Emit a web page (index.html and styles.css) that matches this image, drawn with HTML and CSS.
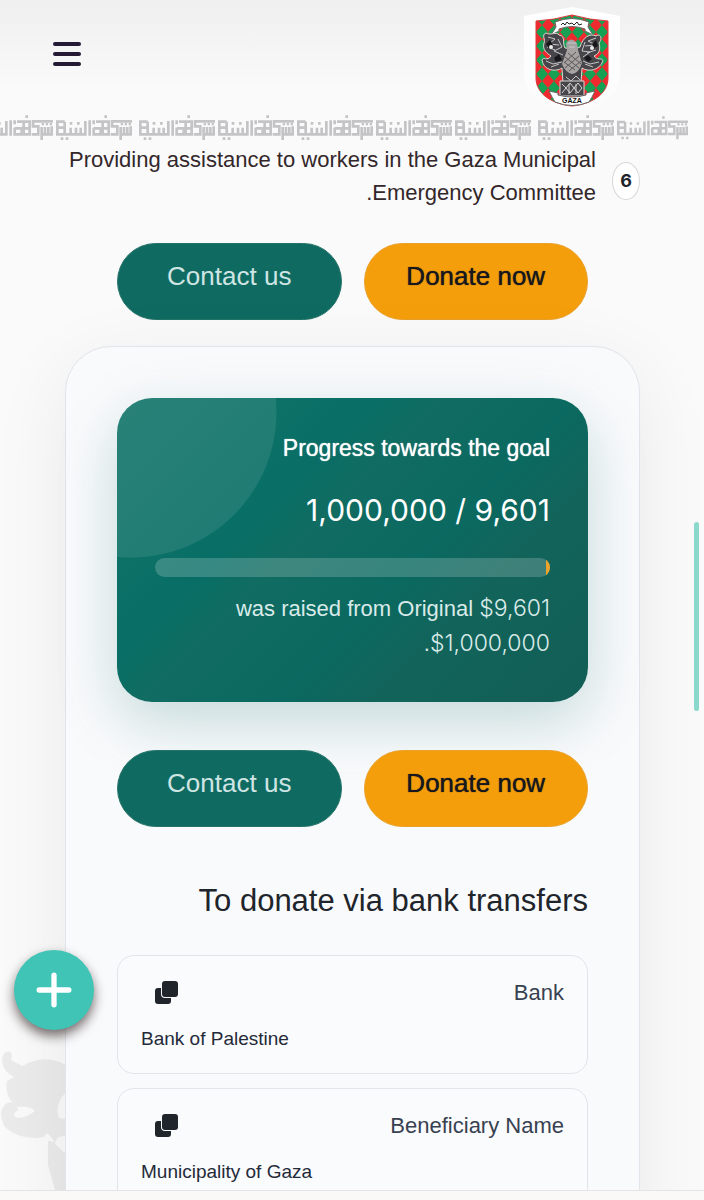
FILE: index.html
```html
<!DOCTYPE html>
<html lang="en">
<head>
<meta charset="utf-8">
<meta name="viewport" content="width=device-width, initial-scale=1">
<title>Gaza Municipality – Donate</title>
<link rel="stylesheet" href="styles.css">
</head>
<body>
<svg class="defs" aria-hidden="true">
  <symbol id="kufic" viewBox="0 0 228 75">
    <g fill="none" stroke="#c4c4c6" stroke-width="8">
      <path d="M26 20H4V58H88V18M4 38H26V20M26 36V58M44 38V58M60 38V58M74 38V58"/>
      <path d="M101 16V62M113 16V28M113 38V58H134V40H113M120 20H140V58H158V40H140M140 20H158V40"/>
      <path d="M164 19H228M168 19V34H184V58H164M194 36V75M194 58H224V34M204 36V58M214 36V58"/>
    </g>
    <path fill="#c4c4c6" d="M14 67h8v8h-8zM29 67h8v8h-8zM41 21h8v8h-8zM63 21h8v8h-8zM145 1h8v8h-8zM194 24h7v7h-7zM206 24h7v7h-7zM218 24h7v7h-7z"/>
  </symbol>
  <symbol id="copy" viewBox="0 0 24 24">
    <rect x="1" y="8" width="16" height="16" rx="3" fill="#20242b"/>
    <rect x="7" y="0" width="18" height="18" rx="4" fill="#fafbfd"/>
    <rect x="8" y="1" width="16" height="16" rx="3" fill="#20242b"/>
  </symbol>
</svg>
<div class="app">
  <header class="header">
    <div class="header-row">
      <button class="menu" aria-label="Menu"><span></span><span></span><span></span></button>
      <a class="logo" href="#" aria-label="Municipality of Gaza">
        <svg viewBox="0 0 96 110" width="96" height="110">
          <defs>
            <pattern id="check" width="12" height="14" patternUnits="userSpaceOnUse" patternTransform="translate(48 9)">
              <rect width="12" height="14" fill="#ee2a2e"/><path d="M6 0L12 7L6 14L0 7Z" fill="#16a053"/>
            </pattern>
            <linearGradient id="plate" x1="0" y1="0" x2="0" y2="1"><stop offset="0" stop-color="#fff"/><stop offset="1" stop-color="#fbfbfb"/></linearGradient>
          </defs>
          <path d="M0 14L48 5L96 14V76Q92 104 48 110Q4 104 0 76Z" fill="url(#plate)"/>
          <path d="M12 19Q30 18 48 13Q66 18 84 19V76C84 92 68 102 48 104C28 102 12 92 12 76Z" fill="url(#check)" stroke="#d9383a"/>
          <path d="M31 20Q48 13 65 20L64 25L69 33L61 29V27Q48 22 35 27V29L27 33L32 25Z" fill="#fff" stroke="#666"/>
          <path d="M37 23l2-2 2 2 2-3 2 2 3-1 2 2 3-3 2 3 3-1" fill="none" stroke="#222"/>
          <g fill="#45454a" stroke="#ded8d5">
            <path d="M41 46C38 41 42 34 35 33C32 29 27 34 22 31C17 33 22 38 20 41C18 48 23 51 27 54C23 60 20 54 18 58C20 69 32 70 38 66L39 81H57L58 66C64 70 75 69 79 59C78 55 73 59 70 54C77 51 76 45 75 41C79 36 76 31 72 34C66 31 59 35 56 45L51 47Z"/>
            <path d="M36 79H60V94H36Z"/>
          </g>
          <path d="M43 48L42 41Q47 34 53 41L54 48L58 61Q55 71 48 72Q41 70 38 62Z" fill="#a7a3a3"/>
          <path d="M41 55l14 11M40 60l11 8M44 51l13 11M55 54L41 66M57 59L45 69M52 50L40 61" stroke="#5c5859" fill="none"/>
          <path d="M44 41h8M45 45h6M24 35l7 2-6 5 10 1M34 37l4 8-8 4 9 4M23 45l8 3M22 59l7 3 9-2M27 65l8-3M72 36l-8 3 8 4-11 1M61 40l-3 9 8 1-7 5M72 48l-9 3M75 60l-9 2-7-3M69 65l-8-3M42 75l5 4 5-5 4 4" fill="none" stroke="#c8c5c6"/>
          <path d="M38 82l4 4 4-5 4 5 4-5 4 5M38 91l4-5 4 5 4-5 4 5 4-5M45 82v10M52 82v10" fill="none" stroke="#d9d5d4"/>
          <path d="M22 42l4-4 3 5-4 4zM68 42l4-4 2 6-4 2zM30 56l5-4 3 6-6 2zM60 56l4-3 4 4-4 3z" fill="#17171a"/>
          <circle cx="27" cy="45" r="2" fill="#eee"/><circle cx="68" cy="46" r="2" fill="#eee"/>
          <path d="M25 89L34 91V93Q48 97 62 93V91L71 89L68 95L65 100Q48 107 31 100L28 95Z" fill="#fff" stroke="#666"/>
          <text class="logo-word" x="48" y="101" text-anchor="middle">GAZA</text>
        </svg>
      </a>
    </div>
    <div class="band" aria-hidden="true">
      <svg><use href="#kufic"/></svg><svg><use href="#kufic"/></svg><svg><use href="#kufic"/></svg><svg><use href="#kufic"/></svg><svg><use href="#kufic"/></svg><svg><use href="#kufic"/></svg><svg><use href="#kufic"/></svg><svg><use href="#kufic"/></svg><svg><use href="#kufic"/></svg>
    </div>
  </header>
  <main class="content">
    <svg class="watermark" viewBox="0 0 66 140" aria-hidden="true"><path d="M2 12C2 4 5 1 10 2Q13 4 11 10L22 16Q45 3 66 15V42Q54 55 59 68L66 69V86Q56 85 55 94L66 104V140H55L48 115V91L54 92Q47 78 44 87Q20 91 5 77Q-4 61 7 53Q17 50 18 60Q10 65 18 68Q28 67 35 61Q30 56 19 57Q4 49 7 31L14 27Q4 22 2 12Z"/></svg>
    <div class="point">
      <p>Providing assistance to workers in the Gaza Municipal<br>.Emergency Committee</p>
      <span class="num">6</span>
    </div>
    <div class="actions outer"><a class="btn teal" href="#">Contact us</a><a class="btn gold" href="#">Donate now</a></div>
    <section class="card">
      <div class="progress">
        <h2>Progress towards the goal</h2>
        <div class="amount">1,000,000 / 9,601</div>
        <div class="track"><div class="fill"></div></div>
        <p>was raised from Original <span class="digits">$9,601</span><br>.<span class="digits">$1,000,000</span></p>
      </div>
      <div class="actions"><a class="btn teal" href="#">Contact us</a><a class="btn gold" href="#">Donate now</a></div>
      <h1>To donate via bank transfers</h1>
      <div class="field">
        <div class="field-top"><button class="copy" aria-label="Copy bank"><svg><use href="#copy"/></svg></button><span>Bank</span></div>
        <div class="value">Bank of Palestine</div>
      </div>
      <div class="field">
        <div class="field-top"><button class="copy" aria-label="Copy beneficiary name"><svg><use href="#copy"/></svg></button><span>Beneficiary Name</span></div>
        <div class="value">Municipality of Gaza</div>
      </div>
    </section>
  </main>
  <footer class="bottom"></footer>
  <div class="thumb"></div>
  <button class="fab" aria-label="Open quick actions"><svg viewBox="0 0 34 34"><path d="M17 3V31M3 17H31" stroke="#fff" stroke-width="5" stroke-linecap="round"/></svg></button>
</div>
</body>
</html>
```
FILE: styles.css
```css
* { box-sizing: border-box; }
body { margin: 0; font-family: "Liberation Sans", Arial, sans-serif; color: #33272a; background: #fafafa; }
h1, h2, p { margin: 0; font-weight: 400; }
a { text-decoration: none; color: inherit; }
button { border: 0; padding: 0; background: none; }
svg { display: block; }
.defs { position: absolute; width: 0; height: 0; }
.app { position: relative; height: 100vh; display: flex; flex-direction: column; overflow: hidden; }
.header { flex: none; background: linear-gradient(#efefef, #fafafa 90px); }
.header-row { display: flex; justify-content: space-between; align-items: flex-start; height: 115px; padding: 0 84px 0 53px; }
.menu { display: flex; flex-direction: column; gap: 6px; margin-top: 42px; }
.menu span { width: 28px; height: 4px; border-radius: 2px; background: #241a35; }
.logo { margin-top: 2px; }
.logo-word { font: bold 7px "Liberation Sans", sans-serif; fill: #111; }
.band { display: flex; gap: 3px; height: 28px; overflow: hidden; justify-content: flex-end; margin-right: 16px; }
.band svg { flex: none; width: 76px; height: 25px; }
.band svg:nth-child(3), .band svg:nth-child(8) { margin-left: 4px; }
.band svg:last-child { width: 71px; margin-right: 0; }
.band svg:last-child use { width: 76px; height: 25px; }
.content { position: relative; flex: 1; min-height: 0; overflow: hidden; padding: 0 64px 0 65px; }
.watermark { position: absolute; left: 0; bottom: 0; width: 66px; height: 140px; fill: #ebebeb; }
.point { display: flex; justify-content: flex-end; align-items: center; gap: 16px; }
.point p { font-size: 22px; line-height: 33px; text-align: right; white-space: nowrap; }
.num { display: grid; place-items: center; width: 28px; height: 38px; margin-top: 9px; border: 1px solid #d6d6d8; border-radius: 50%; background: #fff; font: 700 18px Inter, sans-serif; color: #20242b; }
.actions { display: flex; gap: 22px; }
.outer { padding: 0 52px; margin: 34px 0 26px; }
.btn { flex: 1; height: 77px; padding-top: 16px; border: 1px solid; border-radius: 39px; font-size: 26px; line-height: 32px; text-align: center; }
.teal { background: #0f6b62; border-color: #267369; color: #cfe5e3; }
.gold { background: #f59e0b; border-color: #e9a02b; color: #17171d; text-shadow: 0 0 1px currentColor; }
.card { padding: 51px; border: 1px solid #e1e4ea; border-radius: 46px; background: #f9fafc; position: relative; box-shadow: 0 20px 80px rgba(20, 20, 30, .07); }
.progress { height: 304px; padding: 33px 38px; border-radius: 35px; text-align: right; color: #fff; background: radial-gradient(circle at 14px 14px, rgba(255, 255, 255, .09) 145px, transparent 146px), linear-gradient(135deg, #14756a, #086e65 34%, #116c62 42%, #0a6960 60%, #12645b 72%, #125e56); box-shadow: 0 20px 60px rgba(15, 107, 98, .22); }
.progress h2 { font-size: 23px; line-height: 34px; text-shadow: 0 0 1px currentColor; }
.amount { margin-top: 28px; font: 30px/34px Inter, sans-serif; }
.track { height: 19px; margin: 31px 0 14px; overflow: hidden; border-radius: 10px; background: rgba(255, 255, 255, .19); }
.fill { width: 4px; height: 100%; margin-left: auto; background: #f0a32a; }
.progress p { font-size: 22px; line-height: 34px; color: #d9ebe9; }
.digits { font-family: Inter, sans-serif; font-weight: 300; font-size: 23px; }
.card .actions { margin-top: 48px; }
.card h1 { margin: 54px 0 34px; font-size: 31px; line-height: 40px; text-align: right; color: #20242b; }
.field { height: 119px; margin-bottom: 14px; padding: 22px 23px; border: 1px solid #e1e4e9; border-radius: 17px; background: #fafbfd; }
.field-top { display: flex; justify-content: space-between; font-size: 22px; line-height: 30px; color: #384151; }
.copy { margin-left: 13px; width: 24px; height: 28px; }
.copy svg { width: 24px; height: 24px; }
.value { margin-top: 17px; font-size: 19px; line-height: 28px; color: #242a38; }
.bottom { flex: none; height: 10px; border-top: 1px solid #e4e4e6; background: #fbf8f8; }
.thumb { position: absolute; right: 5px; top: 522px; width: 5px; height: 189px; border-radius: 3px; background: #8ad9cc; }
.fab { position: absolute; left: 14px; bottom: 170px; width: 80px; height: 80px; display: grid; place-items: center; border-radius: 50%; background: #3fc4b5; box-shadow: 0 6px 12px rgba(30, 15, 15, .6); }
.fab svg { width: 36px; height: 36px; }
```
